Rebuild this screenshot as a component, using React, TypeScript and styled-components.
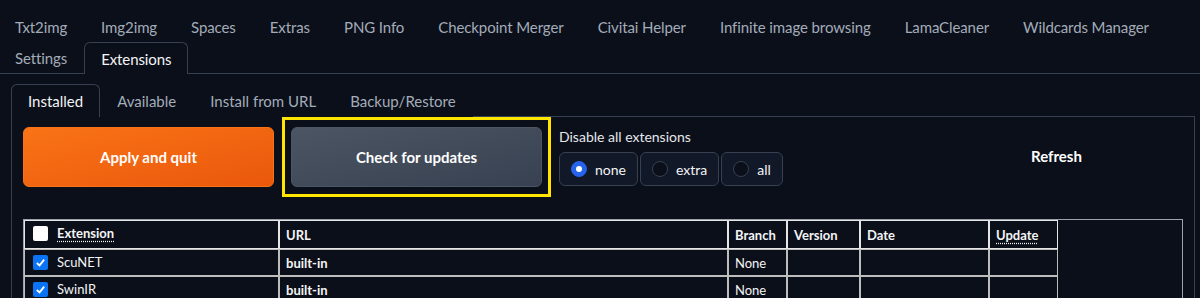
import { createGlobalStyle } from 'styled-components';
import styled from 'styled-components';

const GlobalStyle = createGlobalStyle`
  body {
    margin: 0;
    background: #0b0f19;
    font-family: Lato, 'Noto Sans', sans-serif;
    color: #f3f4f6;
  }
`;

const Page = styled.div`
  width: 1200px;
  height: 298px;
  overflow: hidden;
  background: #0b0f19;
  padding-top: 11px;
  box-sizing: border-box;
`;

const TabNav = styled.div`
  border-bottom: 1px solid #374151;
  margin-left: -2px;
`;

const TabRow = styled.div`
  display: flex;
  height: 31px;
`;

const TabButton = styled.div<{ $active?: boolean }>`
  display: flex;
  align-items: center;
  padding: 0 16px;
  font-size: 15px;
  letter-spacing: -0.1px;
  color: ${(p) => (p.$active ? '#f3f4f6' : '#a3acb9')};
  border: 1px solid ${(p) => (p.$active ? '#374151' : 'transparent')};
  border-bottom: none;
  border-radius: 6px 6px 0 0;
  background: #0b0f19;
  margin-bottom: ${(p) => (p.$active ? '-1px' : '0')};
  height: ${(p) => (p.$active ? '32px' : '31px')};
  box-sizing: border-box;
  white-space: nowrap;
`;

const SubArea = styled.div`
  padding: 10px 5px 0 11px;
`;

const SubNav = styled.div`
  display: flex;
  height: 32px;
  border-bottom: 1px solid #374151;
`;

const SubTab = styled.div<{ $active?: boolean }>`
  display: flex;
  align-items: center;
  padding: 0 16px;
  font-size: 15px;
  color: ${(p) => (p.$active ? '#f3f4f6' : '#a3acb9')};
  border: 1px solid ${(p) => (p.$active ? '#374151' : 'transparent')};
  border-bottom: none;
  border-radius: 6px 6px 0 0;
  background: #0b0f19;
  margin-bottom: -1px;
  white-space: nowrap;
`;

const Panel = styled.div`
  border: 1px solid #374151;
  border-top: none;
  height: 200px;
  padding: 0 11px;
`;

const ActionRow = styled.div`
  display: flex;
  align-items: center;
  gap: 8px;
`;

const BigButton = styled.button<{ $variant: 'primary' | 'secondary' }>`
  width: 251px;
  height: 60px;
  border-radius: 6px;
  border: 1px solid ${(p) => (p.$variant === 'primary' ? '#f97316' : '#4b5563')};
  background: ${(p) =>
    p.$variant === 'primary'
      ? 'linear-gradient(to bottom right, #f97316, #ea580c)'
      : 'linear-gradient(to bottom right, #4b5563, #374151)'};
  color: #fff;
  font-family: Lato, 'Noto Sans', sans-serif;
  font-weight: 700;
  font-size: 15px;
  flex-shrink: 0;
`;

const Highlight = styled.div`
  border: 3px solid #ffe500;
  padding: 7px 6px;
  flex-shrink: 0;
`;

const RadioColumn = styled.div`
  width: 363px;
  flex-shrink: 0;
`;

const RadioLabel = styled.div`
  font-size: 14px;
  color: #e5e7eb;
  margin-bottom: 7px;
`;

const RadioGroup = styled.div`
  display: flex;
  gap: 2px;
`;

const RadioPill = styled.label`
  display: flex;
  align-items: center;
  gap: 8px;
  height: 34px;
  padding: 0 11px;
  box-sizing: border-box;
  background: #111827;
  border: 1px solid #374151;
  border-radius: 6px;
  font-size: 14px;
  color: #f3f4f6;
`;

const RadioDot = styled.span<{ $checked?: boolean }>`
  width: 16px;
  height: 16px;
  border-radius: 50%;
  box-sizing: border-box;
  border: 1px solid ${(p) => (p.$checked ? '#2563eb' : '#374151')};
  background: ${(p) => (p.$checked ? '#2563eb' : '#0b0f19')};
  display: flex;
  align-items: center;
  justify-content: center;
  &::after {
    content: '';
    width: 6px;
    height: 6px;
    border-radius: 50%;
    background: ${(p) => (p.$checked ? '#fff' : 'transparent')};
  }
`;

const RefreshButton = styled.button`
  flex: 1;
  height: 60px;
  background: transparent;
  border: none;
  color: #fff;
  font-family: Lato, 'Noto Sans', sans-serif;
  font-weight: 700;
  font-size: 15px;
  margin-top: -2px;
`;

const Table = styled.table`
  margin-top: 22px;
  width: 1160px;
  border-collapse: separate;
  border-spacing: 0;
  border: 1px solid #9ca3af;
  table-layout: fixed;
  font-size: 13px;
  color: #f3f4f6;
`;

const Cell = styled.td<{ $bold?: boolean; $blank?: boolean }>`
  border: ${(p) => (p.$blank ? 'none' : '1px solid #bdbdbd')};
  height: 25px;
  padding: 0 6px;
  font-weight: ${(p) => (p.$bold ? 700 : 400)};
  white-space: nowrap;
`;

const HeadCell = styled.th<{ $blank?: boolean }>`
  border: ${(p) => (p.$blank ? 'none' : '1px solid #e5e5e5')};
  height: 27px;
  padding: 0 6px;
  text-align: left;
  font-weight: 700;
  white-space: nowrap;
`;

const Abbr = styled.abbr`
  text-decoration: underline dotted;
  text-underline-offset: 3px;
`;

const CheckRow = styled.span`
  display: inline-flex;
  align-items: center;
  gap: 9px;
  padding-left: 2px;
`;

const Box = styled.span<{ $checked?: boolean }>`
  width: 15px;
  height: 15px;
  border-radius: 2px;
  background: ${(p) => (p.$checked ? '#0b74f5' : '#fff')};
  display: inline-flex;
  align-items: center;
  justify-content: center;
`;

const topTabs = [
  'Txt2img',
  'Img2img',
  'Spaces',
  'Extras',
  'PNG Info',
  'Checkpoint Merger',
  'Civitai Helper',
  'Infinite image browsing',
  'LamaCleaner',
  'Wildcards Manager',
];

const rows = [
  { name: 'ScuNET', url: 'built-in', branch: 'None' },
  { name: 'SwinIR', url: 'built-in', branch: 'None' },
];

const Tick = () => (
  <svg width="11" height="11" viewBox="0 0 12 12">
    <path d="M2 6.5 L5 9.2 L10 2.8" stroke="#fff" strokeWidth="2" fill="none" />
  </svg>
);

export default function App() {
  return (
    <Page>
      <GlobalStyle />
      <TabNav>
        <TabRow>
          {topTabs.map((t) => (
            <TabButton key={t}>{t}</TabButton>
          ))}
        </TabRow>
        <TabRow>
          <TabButton>Settings</TabButton>
          <TabButton $active>Extensions</TabButton>
        </TabRow>
      </TabNav>
      <SubArea>
        <SubNav>
          <SubTab $active>Installed</SubTab>
          <SubTab>Available</SubTab>
          <SubTab>Install from URL</SubTab>
          <SubTab>Backup/Restore</SubTab>
        </SubNav>
        <Panel>
          <ActionRow>
            <BigButton $variant="primary">Apply and quit</BigButton>
            <Highlight>
              <BigButton $variant="secondary">Check for updates</BigButton>
            </Highlight>
            <RadioColumn>
              <RadioLabel>Disable all extensions</RadioLabel>
              <RadioGroup>
                <RadioPill>
                  <RadioDot $checked />
                  none
                </RadioPill>
                <RadioPill>
                  <RadioDot />
                  extra
                </RadioPill>
                <RadioPill>
                  <RadioDot />
                  all
                </RadioPill>
              </RadioGroup>
            </RadioColumn>
            <RefreshButton>Refresh</RefreshButton>
          </ActionRow>
          <Table>
            <colgroup>
              <col style={{ width: 255 }} />
              <col style={{ width: 449 }} />
              <col style={{ width: 59 }} />
              <col style={{ width: 73 }} />
              <col style={{ width: 129 }} />
              <col style={{ width: 69 }} />
              <col />
            </colgroup>
            <thead>
              <tr>
                <HeadCell>
                  <CheckRow>
                    <Box />
                    <Abbr>Extension</Abbr>
                  </CheckRow>
                </HeadCell>
                <HeadCell>URL</HeadCell>
                <HeadCell>Branch</HeadCell>
                <HeadCell>Version</HeadCell>
                <HeadCell>Date</HeadCell>
                <HeadCell>
                  <Abbr>Update</Abbr>
                </HeadCell>
                <HeadCell $blank />
              </tr>
            </thead>
            <tbody>
              {rows.map((r) => (
                <tr key={r.name}>
                  <Cell>
                    <CheckRow>
                      <Box $checked>
                        <Tick />
                      </Box>
                      {r.name}
                    </CheckRow>
                  </Cell>
                  <Cell $bold>{r.url}</Cell>
                  <Cell>{r.branch}</Cell>
                  <Cell />
                  <Cell />
                  <Cell />
                  <Cell $blank />
                </tr>
              ))}
            </tbody>
          </Table>
        </Panel>
      </SubArea>
    </Page>
  );
}
